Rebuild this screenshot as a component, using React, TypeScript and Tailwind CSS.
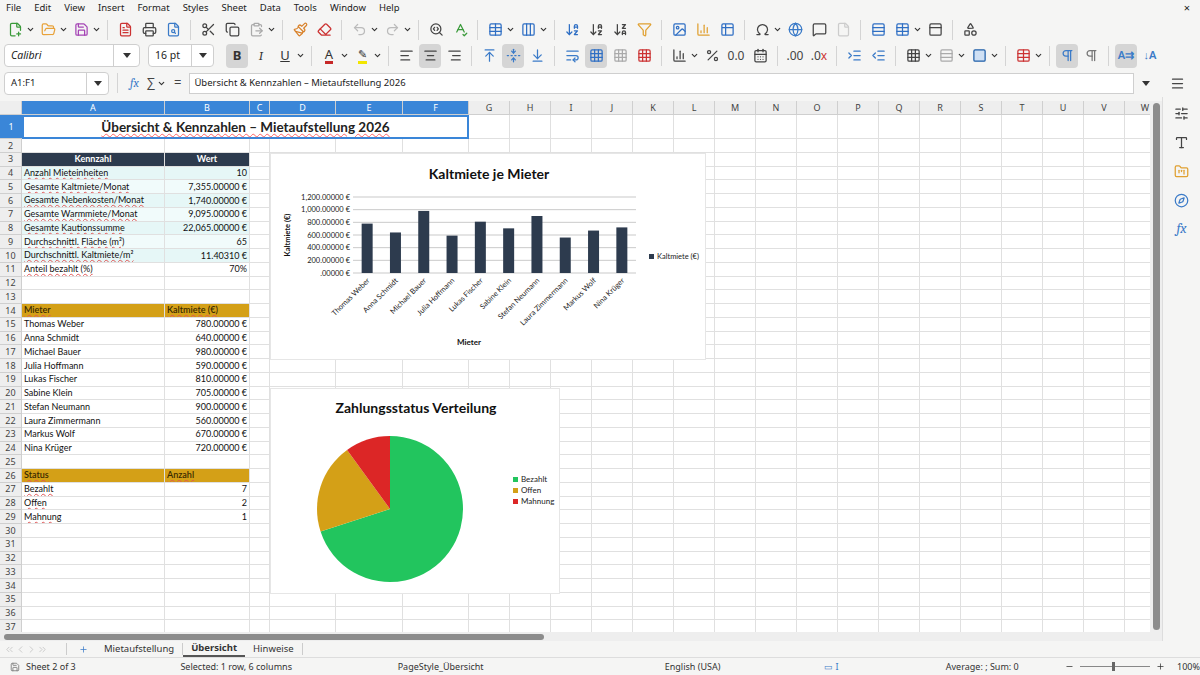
import {
  FilePlus2, FolderOpen, Save, FileText, Printer, FileSearch, Scissors, Copy, ClipboardPaste,
  Paintbrush, Eraser, Undo2, Redo2, SearchCode, SpellCheck, Table, Columns3, ArrowDownAZ, ArrowDownZA,
  Filter, Image, BarChart3, Table2, Omega, Globe, MessageSquare, File, Rows3, PanelTop, Shapes,
  AlignLeft, AlignCenter, AlignRight, ArrowUpToLine, FoldVertical, ArrowDownToLine, WrapText,
  Grid3x3, Percent, CalendarDays, IndentIncrease, IndentDecrease, Square, Pilcrow, ChevronDown,
  Menu, SlidersHorizontal, Type, FolderKanban, Compass, Plus, Minus, ChevronsLeft, ChevronLeft, ChevronRight, ChevronsRight,
} from 'lucide-react'

const ui = { fontFamily: '"Noto Sans", "Open Sans", sans-serif' }
const cellFont = { fontFamily: 'Lato, "Noto Sans", sans-serif' }

const colW = ['w-[143px]', 'w-[85px]', 'w-[20px]', 'w-[66px]', 'w-[67px]', 'w-[66px]']
const cols = ['A', 'B', 'C', 'D', 'E', 'F', 'G', 'H', 'I', 'J', 'K', 'L', 'M', 'N', 'O', 'P', 'Q', 'R', 'S', 'T', 'U', 'V', 'W']

const kenn: [string, string][] = [
  ['Anzahl Mieteinheiten', '10'],
  ['Gesamte Kaltmiete/Monat', '7,355.00000 €'],
  ['Gesamte Nebenkosten/Monat', '1,740.00000 €'],
  ['Gesamte Warmmiete/Monat', '9,095.00000 €'],
  ['Gesamte Kautionssumme', '22,065.00000 €'],
  ['Durchschnittl. Fläche (m²)', '65'],
  ['Durchschnittl. Kaltmiete/m²', '11.40310 €'],
  ['Anteil bezahlt (%)', '70%'],
]
const mieter: [string, number][] = [
  ['Thomas Weber', 780], ['Anna Schmidt', 640], ['Michael Bauer', 980], ['Julia Hoffmann', 590],
  ['Lukas Fischer', 810], ['Sabine Klein', 705], ['Stefan Neumann', 900], ['Laura Zimmermann', 560],
  ['Markus Wolf', 670], ['Nina Krüger', 720],
]
const status: [string, string][] = [['Bezahlt', '7'], ['Offen', '2'], ['Mahnung', '1']]

type Row = { a?: string; b?: string; kind?: 'dark' | 'gold' | 'cyan1' | 'cyan2' | 'wavy' | 'plain' }

function buildRows(): Record<number, Row> {
  const r: Record<number, Row> = {}
  r[3] = { a: 'Kennzahl', b: 'Wert', kind: 'dark' }
  kenn.forEach(([a, b], i) => (r[4 + i] = { a, b, kind: i === 7 ? 'wavy' : i % 2 === 0 ? 'cyan1' : 'cyan2' }))
  r[14] = { a: 'Mieter', b: 'Kaltmiete (€)', kind: 'gold' }
  mieter.forEach(([a, v], i) => (r[15 + i] = { a, b: `${v}.00000 €`, kind: 'plain' }))
  r[26] = { a: 'Status', b: 'Anzahl', kind: 'gold' }
  status.forEach(([a, b], i) => (r[27 + i] = { a, b, kind: 'wavy' }))
  return r
}

function Sep() {
  return <div className="w-px h-5 bg-[#d4d4d4] mx-1" />
}

function Dd() {
  return <ChevronDown size={9} strokeWidth={3} className="text-[#333] -ml-0.5" />
}

function TB({ children, on }: { children: React.ReactNode; on?: boolean }) {
  return <div className={`flex items-center justify-center h-6 min-w-[22px] px-0.5 rounded ${on ? 'bg-[#d5d5d5]' : ''}`}>{children}</div>
}

function Toolbar1() {
  const s = 15
  return (
    <div className="flex items-center h-[25px] px-1 gap-0.5">
      <TB><FilePlus2 size={s} className="text-[#3a9a3a]" /></TB><Dd />
      <TB><FolderOpen size={s} className="text-[#e8a23a]" /></TB><Dd />
      <TB><Save size={s} className="text-[#a545b5]" /></TB><Dd />
      <Sep />
      <TB><FileText size={s} className="text-[#c33]" /></TB>
      <TB><Printer size={s} className="text-[#444]" /></TB>
      <TB><FileSearch size={s} className="text-[#3b7bc8]" /></TB>
      <Sep />
      <TB><Scissors size={s} className="text-[#444]" /></TB>
      <TB><Copy size={s} className="text-[#444]" /></TB>
      <TB><ClipboardPaste size={s} className="text-[#aaa]" /></TB><Dd />
      <Sep />
      <TB><Paintbrush size={s} className="text-[#d9822b]" /></TB>
      <TB><Eraser size={s} className="text-[#c33]" /></TB>
      <Sep />
      <TB><Undo2 size={s} className="text-[#bbb]" /></TB><Dd />
      <TB><Redo2 size={s} className="text-[#bbb]" /></TB><Dd />
      <Sep />
      <TB><SearchCode size={s} className="text-[#444]" /></TB>
      <TB><SpellCheck size={s} className="text-[#3a9a3a]" /></TB>
      <Sep />
      <TB><Table size={s} className="text-[#2f6fc4]" /></TB><Dd />
      <TB><Columns3 size={s} className="text-[#2f6fc4]" /></TB><Dd />
      <Sep />
      <TB><ArrowDownAZ size={s} className="text-[#2f6fc4]" /></TB>
      <TB><ArrowDownAZ size={s} className="text-[#444]" /></TB>
      <TB><ArrowDownZA size={s} className="text-[#444]" /></TB>
      <TB><Filter size={s} className="text-[#e0a030]" /></TB>
      <Sep />
      <TB><Image size={s} className="text-[#2f6fc4]" /></TB>
      <TB><BarChart3 size={s} className="text-[#e0a030]" /></TB>
      <TB><Table2 size={s} className="text-[#2f6fc4]" /></TB>
      <Sep />
      <TB><Omega size={s} className="text-[#444]" /></TB><Dd />
      <TB><Globe size={s} className="text-[#3b7bc8]" /></TB>
      <TB><MessageSquare size={s} className="text-[#444]" /></TB>
      <TB><File size={s} className="text-[#ccc]" /></TB>
      <Sep />
      <TB><Rows3 size={s} className="text-[#2f6fc4]" /></TB>
      <TB><Table size={s} className="text-[#2f6fc4]" /></TB><Dd />
      <TB><PanelTop size={s} className="text-[#444]" /></TB>
      <Sep />
      <TB><Shapes size={s} className="text-[#444]" /></TB>
    </div>
  )
}

function Toolbar2() {
  const s = 15
  return (
    <div className="flex items-center h-[27px] px-1 gap-0.5">
      <div className="flex items-center w-[136px] h-[23px] bg-white border border-[#cfcfcf] rounded">
        <span className="flex-1 pl-1.5 text-[10.5px] italic text-[#222]">Calibri</span>
        <span className="w-[26px] h-full flex items-center justify-center border-l border-[#cfcfcf]"><span className="border-x-[4px] border-t-[5px] border-x-transparent border-t-[#333]" /></span>
      </div>
      <div className="flex items-center w-[66px] h-[23px] bg-white border border-[#cfcfcf] rounded ml-1.5">
        <span className="flex-1 pl-1.5 text-[10.5px] text-[#222]">16 pt</span>
        <span className="w-[22px] h-full flex items-center justify-center border-l border-[#cfcfcf]"><span className="border-x-[4px] border-t-[5px] border-x-transparent border-t-[#333]" /></span>
      </div>
      <div className="w-2" />
      <TB on><span className="text-[13px] font-bold text-[#333]">B</span></TB>
      <TB><span className="text-[13px] italic text-[#333] font-serif">I</span></TB>
      <TB><span className="text-[13px] underline text-[#333]">U</span></TB><Dd />
      <Sep />
      <TB><span className="text-[13px] text-[#333] border-b-[3px] border-[#c62828] leading-[14px]">A</span></TB><Dd />
      <TB><span className="text-[11px] text-[#333] border-b-[3px] border-[#f2e600] leading-[14px]">✎</span></TB><Dd />
      <Sep />
      <TB><AlignLeft size={s} className="text-[#444]" /></TB>
      <TB on><AlignCenter size={s} className="text-[#444]" /></TB>
      <TB><AlignRight size={s} className="text-[#444]" /></TB>
      <Sep />
      <TB><ArrowUpToLine size={s} className="text-[#3b7bc8]" /></TB>
      <TB on><FoldVertical size={s} className="text-[#3b7bc8]" /></TB>
      <TB><ArrowDownToLine size={s} className="text-[#3b7bc8]" /></TB>
      <Sep />
      <TB><WrapText size={s} className="text-[#3b7bc8]" /></TB>
      <TB on><Grid3x3 size={s} className="text-[#2f6fc4]" /></TB>
      <TB><Grid3x3 size={s} className="text-[#aaa]" /></TB>
      <TB><Grid3x3 size={s} className="text-[#c33]" /></TB>
      <Sep />
      <TB><BarChart3 size={s} className="text-[#444]" /></TB><Dd />
      <TB><Percent size={s} className="text-[#444]" /></TB>
      <TB><span className="text-[12px] text-[#444]">0.0</span></TB>
      <TB><CalendarDays size={s} className="text-[#444]" /></TB>
      <Sep />
      <TB><span className="text-[12px] text-[#444]">.00</span></TB>
      <TB><span className="text-[12px] text-[#444]">.0<span className="text-[#c33]">x</span></span></TB>
      <Sep />
      <TB><IndentIncrease size={s} className="text-[#3b7bc8]" /></TB>
      <TB><IndentDecrease size={s} className="text-[#3b7bc8]" /></TB>
      <Sep />
      <TB><Grid3x3 size={s} className="text-[#444]" /></TB><Dd />
      <TB><Rows3 size={s} className="text-[#aaa]" /></TB><Dd />
      <TB><Square size={s} className="text-[#1f5fa8]" fill="#cfe0f4" /></TB><Dd />
      <Sep />
      <TB><Table size={s} className="text-[#c33]" /></TB><Dd />
      <Sep />
      <TB on><Pilcrow size={s} className="text-[#3b7bc8]" /></TB>
      <TB><Pilcrow size={s} className="text-[#777]" /></TB>
      <Sep />
      <TB on><span className="text-[11px] text-[#3b7bc8] font-semibold">A⇉</span></TB>
      <TB><span className="text-[11px] text-[#3b7bc8] font-semibold">↓A</span></TB>
    </div>
  )
}

function BarChart() {
  const x0 = 82, x1 = 365, y0 = 43, y1 = 119
  const slot = (x1 - x0) / 10
  const ticks = [0, 200, 400, 600, 800, 1000, 1200]
  const fmt = (v: number) => (v === 0 ? '.00000 €' : `${v >= 1000 ? '1,' + String(v - 1000).padStart(3, '0') : v}.00000 €`)
  return (
    <svg width="436" height="207" className="absolute left-[270px] top-[52px] bg-white border border-[#e6e6e6]" style={cellFont}>
      <text x="218" y="25" textAnchor="middle" fontSize="14" fontWeight="bold" fill="#111">Kaltmiete je Mieter</text>
      {ticks.map((t) => {
        const y = y1 - (t / 1200) * (y1 - y0)
        return (
          <g key={t}>
            <line x1={x0} x2={x1} y1={y} y2={y} stroke="#b3b3b3" strokeWidth="0.7" />
            <text x={x0 - 3} y={y + 2.5} textAnchor="end" fontSize="7.5" fill="#222">{fmt(t)}</text>
          </g>
        )
      })}
      {mieter.map(([n, v], i) => {
        const cx = x0 + slot * (i + 0.5)
        const h = (v / 1200) * (y1 - y0)
        return (
          <g key={n}>
            <rect x={cx - 5.5} y={y1 - h} width="11" height={h} fill="#2d3b4e" />
            <text x={cx + 3} y={y1 + 8} textAnchor="end" fontSize="7.5" fill="#222" transform={`rotate(-45 ${cx + 3} ${y1 + 8})`}>{n}</text>
          </g>
        )
      })}
      <text x="19" y="81" textAnchor="middle" fontSize="7.5" fontWeight="bold" fill="#111" transform="rotate(-90 19 81)">Kaltmiete (€)</text>
      <text x="198" y="191" textAnchor="middle" fontSize="8" fontWeight="bold" fill="#111">Mieter</text>
      <rect x="378" y="100" width="5" height="5" fill="#2d3b4e" />
      <text x="386" y="105" fontSize="7.5" fill="#222">Kaltmiete (€)</text>
    </svg>
  )
}

function PieChart() {
  const cx = 119, cy = 120, r = 73
  const pt = (deg: number) => {
    const a = ((deg - 90) * Math.PI) / 180
    return `${cx + r * Math.cos(a)} ${cy + r * Math.sin(a)}`
  }
  const slice = (a: number, b: number, c: string) => (
    <path d={`M${cx} ${cy} L${pt(a)} A${r} ${r} 0 ${b - a > 180 ? 1 : 0} 1 ${pt(b)} Z`} fill={c} />
  )
  return (
    <svg width="290" height="206" className="absolute left-[270px] top-[287px] bg-white border border-[#e6e6e6]" style={cellFont}>
      <text x="145" y="24" textAnchor="middle" fontSize="14" fontWeight="bold" fill="#111">Zahlungsstatus Verteilung</text>
      {slice(0, 252, '#22c55e')}
      {slice(252, 324, '#d4a017')}
      {slice(324, 360, '#dc2626')}
      {[['Bezahlt', '#22c55e'], ['Offen', '#d4a017'], ['Mahnung', '#dc2626']].map(([l, c], i) => (
        <g key={l}>
          <rect x="242" y={88 + i * 11} width="5" height="5" fill={c} />
          <text x="250" y={93 + i * 11} fontSize="8" fill="#222">{l}</text>
        </g>
      ))}
    </svg>
  )
}

function Sheet() {
  const rows = buildRows()
  const cellBase = 'shrink-0 border-r border-b border-[#e0e0e0] h-full flex items-center px-0.5 overflow-hidden whitespace-nowrap'
  return (
    <div className="relative flex-1 overflow-hidden bg-white" style={cellFont}>
      {/* column header */}
      <div className="flex h-[14px] bg-[#eeeeee] text-[9px] text-[#444]" style={ui}>
        <div className="w-[22px] shrink-0 border-r border-b border-[#cfcfcf]" />
        {cols.map((c, i) => (
          <div key={c} className={`${i < 6 ? colW[i] + ' bg-[#3a86d8] text-white' : 'w-[41px]'} shrink-0 border-r border-b border-[#cfcfcf] flex items-center justify-center`}>{c}</div>
        ))}
      </div>
      {/* row 1 */}
      <div className="flex h-[24px]">
        <div className="w-[22px] shrink-0 bg-[#3a86d8] text-white text-[9px] flex items-center justify-center border-b border-[#cfcfcf]" style={ui}>1</div>
        <div className="w-[447px] shrink-0 border-2 border-[#3a86d8] flex items-center justify-center text-[13.5px] font-bold text-[#222] underline decoration-wavy decoration-red-400 decoration-1">
          Übersicht &amp; Kennzahlen – Mietaufstellung 2026
        </div>
        {cols.slice(6).map((c) => <div key={c} className="w-[41px] shrink-0 border-r border-b border-[#e0e0e0]" />)}
      </div>
      {Array.from({ length: 36 }, (_, i) => i + 2).map((n) => {
        const r = rows[n] || {}
        const bg =
          r.kind === 'dark' ? 'bg-[#2d3b4e] text-white font-bold justify-center'
          : r.kind === 'gold' ? 'bg-[#d4a017] text-[#3a2a00] font-semibold'
          : r.kind === 'cyan1' ? 'bg-[#e6f7f7]'
          : r.kind === 'cyan2' ? 'bg-[#f1fbfb]' : ''
        const wavy = r.kind && r.kind !== 'plain' && r.kind !== 'dark' ? 'underline decoration-wavy decoration-[#e05555] decoration-1 underline-offset-1 leading-[10px]' : ''
        return (
          <div key={n} className="flex h-[13.75px] text-[9px] text-[#111]">
            <div className="w-[22px] shrink-0 bg-[#eeeeee] text-[#444] border-r border-b border-[#cfcfcf] flex items-center justify-center" style={ui}>{n}</div>
            <div className={`${cellBase} ${colW[0]} ${bg}`}><span className={wavy}>{r.a}</span></div>
            <div className={`${cellBase} ${colW[1]} ${bg} ${r.kind === 'dark' ? '' : r.kind === 'gold' ? '' : 'justify-end'}`}>
              <span className={r.kind === 'gold' ? wavy : ''}>{r.b}</span>
            </div>
            {colW.slice(2).map((w) => <div key={w} className={`${cellBase} ${w}`} />)}
            {cols.slice(6).map((c) => <div key={c} className={`${cellBase} w-[41px]`} />)}
          </div>
        )
      })}
      <BarChart />
      <PieChart />
    </div>
  )
}

export default function App() {
  const menus = ['File', 'Edit', 'View', 'Insert', 'Format', 'Styles', 'Sheet', 'Data', 'Tools', 'Window', 'Help']
  return (
    <div className="w-[1200px] h-[675px] flex flex-col bg-[#f5f5f4] overflow-hidden text-[#222]" style={ui}>
      <div className="flex items-center h-[17px] px-1.5 text-[9.5px] gap-[13px] text-[#222]">
        {menus.map((m) => <span key={m}>{m}</span>)}
        <span className="ml-auto mr-1 text-[11px]">×</span>
      </div>
      <Toolbar1 />
      <Toolbar2 />
      {/* formula bar */}
      <div className="flex items-center h-[28px] px-1 gap-1">
        <div className="flex items-center w-[105px] h-[23px] bg-white border border-[#cfcfcf] rounded">
          <span className="flex-1 pl-1.5 text-[9.5px]">A1:F1</span>
          <span className="w-[22px] h-full flex items-center justify-center border-l border-[#cfcfcf]"><span className="border-x-[4px] border-t-[5px] border-x-transparent border-t-[#333]" /></span>
        </div>
        <Sep />
        <span className="italic text-[#3b7bc8] text-[12px] font-serif ml-1">fx</span>
        <span className="text-[13px] text-[#444] ml-1">∑</span><Dd />
        <span className="text-[13px] text-[#444] mx-1">=</span>
        <div className="flex-1 h-[21px] bg-white border border-[#cfcfcf] flex items-center pl-1 text-[9.5px]">
          Übersicht &amp; Kennzahlen – Mietaufstellung 2026
        </div>
        <span className="w-[16px] flex justify-center"><span className="border-x-[4px] border-t-[5px] border-x-transparent border-t-[#333]" /></span>
        <div className="w-[38px] flex justify-center"><Menu size={15} className="text-[#444]" /></div>
      </div>
      <div className="flex flex-1 min-h-0">
        <div className="flex flex-col flex-1 min-w-0 pt-1">
          <div className="flex flex-1 min-h-0">
            <Sheet />
            <div className="w-[12px] bg-[#eeeeee] flex justify-center py-0.5">
              <div className="w-[7px] h-full bg-[#8c8c8c] rounded-full" />
            </div>
          </div>
          <div className="h-[9px] bg-[#eeeeee] flex items-center px-1">
            <div className="w-[540px] h-[6px] bg-[#8c8c8c] rounded-full" />
          </div>
        </div>
        <div className="w-[38px] flex flex-col items-center gap-[14px] pt-[9px] border-l border-[#ddd]">
          <SlidersHorizontal size={15} className="text-[#444]" />
          <Type size={15} className="text-[#444]" />
          <FolderKanban size={15} className="text-[#e0a030]" />
          <Compass size={15} className="text-[#3b7bc8]" />
          <span className="italic text-[#3b7bc8] text-[14px] font-serif leading-none">fx</span>
        </div>
      </div>
      {/* tabs */}
      <div className="flex items-center h-[17px] text-[9.5px] text-[#333] border-b border-[#ddd]">
        <div className="flex items-center text-[#c8c8c8] pl-1 w-[66px]">
          <ChevronsLeft size={11} /><ChevronLeft size={11} /><ChevronRight size={11} /><ChevronsRight size={11} />
        </div>
        <div className="w-px h-3 bg-[#ccc]" />
        <Plus size={9} className="text-[#3b7bc8] ml-3" />
        <span className="ml-2 px-2">Mietaufstellung</span>
        <div className="w-px h-3 bg-[#ccc]" />
        <span className="px-2 font-bold border-b-2 border-[#555] h-full flex items-center">Übersicht</span>
        <span className="px-2">Hinweise</span>
        <div className="w-px h-3 bg-[#ccc]" />
      </div>
      <div className="flex items-center h-[17px] text-[9px] text-[#333]">
        <Save size={10} className="text-[#777] ml-2 w-[14px]" />
        <span className="ml-1 w-[155px]">Sheet 2 of 3</span>
        <span className="w-[218px]">Selected: 1 row, 6 columns</span>
        <span className="w-[268px]">PageStyle_Übersicht</span>
        <span className="w-[160px]">English (USA)</span>
        <span className="w-[122px] text-[#3b7bc8]">▭ I</span>
        <span className="w-[120px]">Average: ; Sum: 0</span>
        <Minus size={9} />
        <div className="relative w-[70px] h-px bg-[#888] mx-1.5">
          <div className="absolute left-[32px] -top-[4px] w-[3px] h-[9px] bg-[#666]" />
        </div>
        <Plus size={9} />
        <span className="ml-3">100%</span>
      </div>
    </div>
  )
}
